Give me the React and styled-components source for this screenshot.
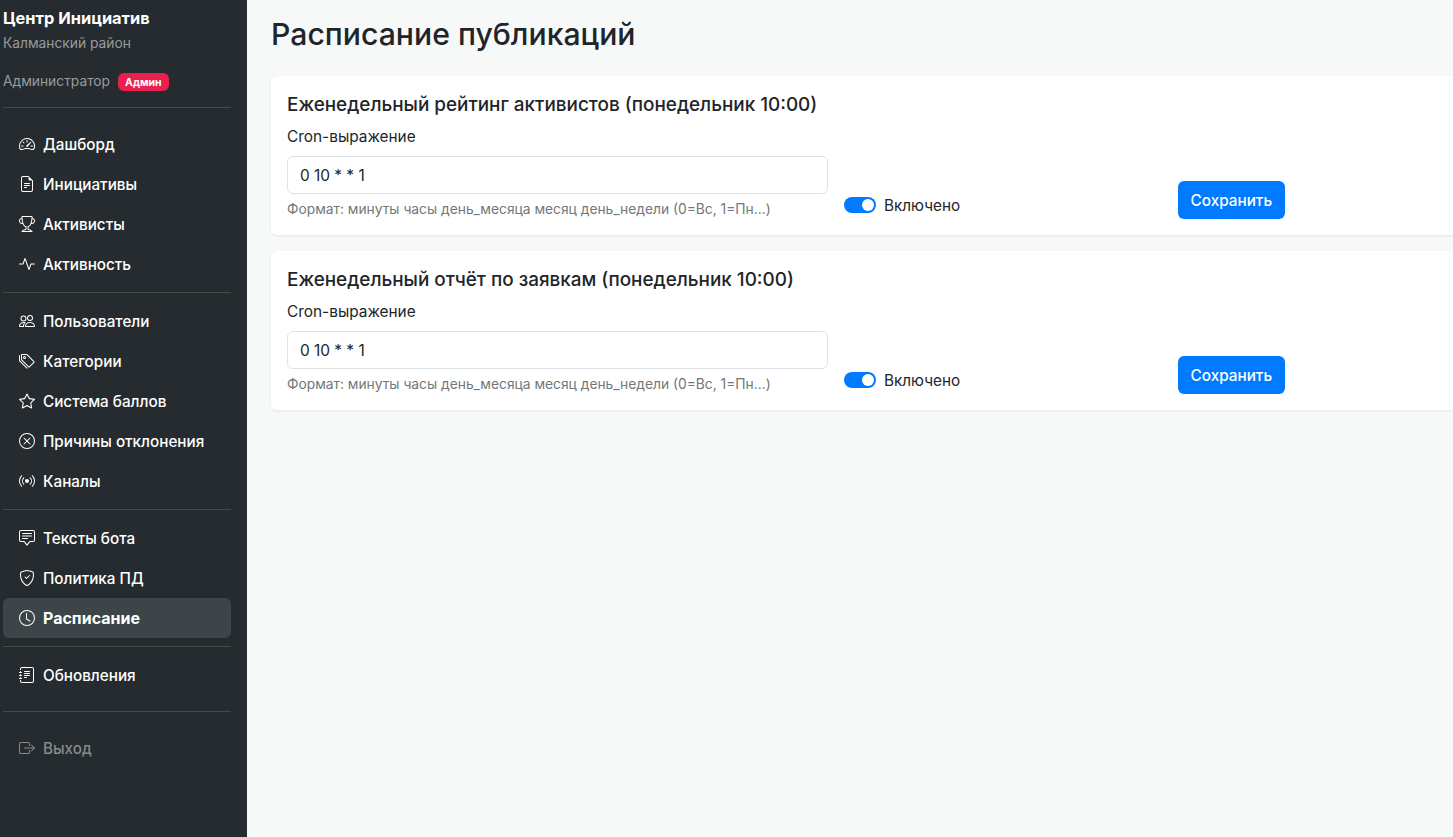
import React from "react";
import styled, { createGlobalStyle } from "styled-components";
import {
  BsSpeedometer2,
  BsFileEarmarkText,
  BsTrophy,
  BsActivity,
  BsPeople,
  BsTags,
  BsStar,
  BsXCircle,
  BsBroadcast,
  BsChatSquareText,
  BsShieldCheck,
  BsClock,
  BsJournalText,
  BsBoxArrowRight,
} from "react-icons/bs";

const GlobalStyle = createGlobalStyle`
  * { box-sizing: border-box; }
  html, body { margin: 0; padding: 0; height: 100%; overflow: hidden; }
  body {
    font-family: Inter, "Noto Sans", sans-serif;
    font-size: 16px;
    color: #212529;
    background: #f7f9f9;
  }
`;

const navGroups = [
  [
    { label: "Дашборд", icon: BsSpeedometer2 },
    { label: "Инициативы", icon: BsFileEarmarkText },
    { label: "Активисты", icon: BsTrophy },
    { label: "Активность", icon: BsActivity },
  ],
  [
    { label: "Пользователи", icon: BsPeople },
    { label: "Категории", icon: BsTags },
    { label: "Система баллов", icon: BsStar },
    { label: "Причины отклонения", icon: BsXCircle },
    { label: "Каналы", icon: BsBroadcast },
  ],
  [
    { label: "Тексты бота", icon: BsChatSquareText },
    { label: "Политика ПД", icon: BsShieldCheck },
    { label: "Расписание", icon: BsClock, active: true },
  ],
  [{ label: "Обновления", icon: BsJournalText }],
];

const schedules = [
  "Еженедельный рейтинг активистов (понедельник 10:00)",
  "Еженедельный отчёт по заявкам (понедельник 10:00)",
];

export default function App() {
  return (
    <Layout>
      <GlobalStyle />
      <Sidebar>
        <Brand>
          <BrandName>Центр Инициатив</BrandName>
          <BrandRegion>Калманский район</BrandRegion>
          <UserRow>
            Администратор
            <RoleBadge>Админ</RoleBadge>
          </UserRow>
        </Brand>
        <HeaderDivider />
        {navGroups.map((group, i) => (
          <React.Fragment key={i}>
            {group.map((item) => (
              <NavItem key={item.label} $active={item.active}>
                <item.icon size={16} />
                {item.label}
              </NavItem>
            ))}
            {i < navGroups.length - 1 && <Divider />}
          </React.Fragment>
        ))}
        <FooterDivider />
        <LogoutItem>
          <BsBoxArrowRight size={16} />
          Выход
        </LogoutItem>
      </Sidebar>
      <Main>
        <PageTitle>Расписание публикаций</PageTitle>
        {schedules.map((title) => (
          <Card key={title}>
            <CardTitle>{title}</CardTitle>
            <FormRow>
              <Field>
                <FieldLabel>Cron-выражение</FieldLabel>
                <CronInput defaultValue="0 10 * * 1" />
                <HelpText>Формат: минуты часы день_месяца месяц день_недели (0=Вс, 1=Пн...)</HelpText>
              </Field>
              <ToggleRow>
                <Toggle />
                Включено
              </ToggleRow>
              <SaveButton>Сохранить</SaveButton>
            </FormRow>
          </Card>
        ))}
      </Main>
    </Layout>
  );
}

const Layout = styled.div`
  display: flex;
  width: 100%;
  height: 100vh;
  overflow: hidden;
`;

const Sidebar = styled.aside`
  flex: 0 0 247px;
  height: 100%;
  padding: 8px 16px 0 3px;
  background: #252b2f;
  color: #fff;
  display: flex;
  flex-direction: column;
`;

const Brand = styled.div`
  display: flex;
  flex-direction: column;
`;

const BrandName = styled.div`
  font-size: 16.4px;
  line-height: 20px;
  font-weight: 700;
`;

const BrandRegion = styled.div`
  margin-top: 5px;
  font-size: 13.8px;
  line-height: 20px;
  color: #989b9d;
`;

const UserRow = styled.div`
  margin-top: 18px;
  height: 20px;
  display: flex;
  align-items: center;
  gap: 8px;
  font-size: 13.8px;
  color: #989b9d;
`;

const RoleBadge = styled.span`
  display: inline-flex;
  align-items: center;
  height: 18px;
  margin-top: 2px;
  padding: 0 7px;
  border-radius: 6px;
  background: #e9204f;
  color: #fff;
  font-size: 10.5px;
  font-weight: 700;
`;

const Divider = styled.hr`
  flex: none;
  width: 100%;
  height: 1px;
  margin: 8px 0;
  border: 0;
  background: #434849;
`;

const HeaderDivider = styled(Divider)`
  margin: 16px 0;
`;

const NavItem = styled.a`
  flex: none;
  height: 40px;
  padding: 0 16px;
  display: flex;
  align-items: center;
  gap: 8px;
  border-radius: 6px;
  font-size: ${(p) => (p.$active ? "16px" : "15.25px")};
  font-weight: ${(p) => (p.$active ? 700 : 500)};
  color: #fff;
  background: ${(p) => (p.$active ? "#3e4548" : "transparent")};
`;

const FooterDivider = styled(Divider)`
  margin: 16px 0;
`;

const LogoutItem = styled(NavItem)`
  color: #858a8c;
`;

const Main = styled.main`
  flex: 1;
  min-width: 0;
  padding: 16px 0 0 24px;
  overflow: hidden;
`;

const PageTitle = styled.h1`
  margin: 0 0 24px;
  font-size: 30.2px;
  line-height: 36px;
  font-weight: 500;
  color: #212529;
`;

const Card = styled.section`
  margin-bottom: 16px;
  padding: 16px;
  height: 159px;
  background: #fff;
  border-radius: 6px 0 0 6px;
  box-shadow: 0 1px 3px rgba(0, 0, 0, 0.08);
`;

const CardTitle = styled.h5`
  margin: 0 0 8px;
  font-size: 18.9px;
  line-height: 26px;
  font-weight: 500;
`;

const FormRow = styled.div`
  display: grid;
  grid-template-columns: 541px 318px auto;
  justify-content: start;
  column-gap: 16px;
  align-items: end;
`;

const Field = styled.div`
  display: flex;
  flex-direction: column;
`;

const FieldLabel = styled.label`
  margin-bottom: 8px;
  font-size: 15.4px;
  line-height: 22px;
`;

const CronInput = styled.input`
  width: 100%;
  height: 38px;
  padding: 0 12px;
  border: 1px solid #dee2e6;
  border-radius: 6px;
  background: #fff;
  color: #212529;
  font: inherit;
  font-size: 15.4px;
  outline: none;
`;

const HelpText = styled.div`
  margin-top: 5px;
  font-size: 13.8px;
  line-height: 20px;
  color: #73777a;
`;

const ToggleRow = styled.div`
  display: flex;
  align-items: center;
  gap: 8px;
  height: 28px;
  font-size: 15.3px;
`;

const Toggle = styled.span`
  position: relative;
  width: 32px;
  height: 16px;
  border-radius: 8px;
  background: #007bff;

  &::after {
    content: "";
    position: absolute;
    top: 2px;
    right: 2px;
    width: 12px;
    height: 12px;
    border-radius: 50%;
    background: #fff;
  }
`;

const SaveButton = styled.button`
  height: 38px;
  padding: 0 12.5px;
  border: 0;
  border-radius: 6px;
  background: #007bff;
  color: #fff;
  font: inherit;
  font-size: 15.3px;
  font-weight: 500;
`;
